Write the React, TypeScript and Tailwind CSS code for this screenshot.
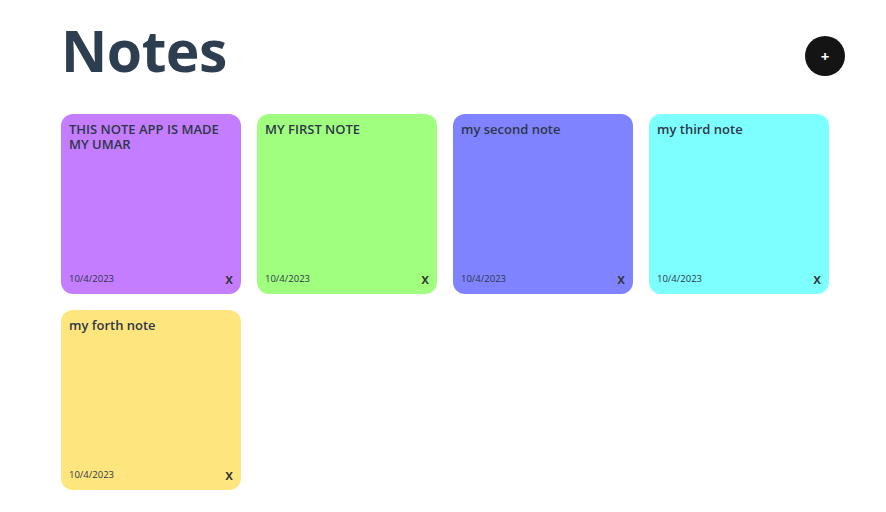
const notes = [
  { text: 'THIS NOTE APP IS MADE MY UMAR', date: '10/4/2023', color: 'bg-[#c57dff]' },
  { text: 'MY FIRST NOTE', date: '10/4/2023', color: 'bg-[#a1ff80]' },
  { text: 'my second note', date: '10/4/2023', color: 'bg-[#8083ff]' },
  { text: 'my third note', date: '10/4/2023', color: 'bg-[#7dffff]' },
  { text: 'my forth note', date: '10/4/2023', color: 'bg-[#ffe57e]' },
];

export default function App() {
  return (
    <div className="min-h-screen bg-white font-['Open_Sans',sans-serif] text-[#2d3748]">
      <div className="flex items-start justify-between pl-[61px] pr-[41px] pt-[10px]">
        <h1 className="text-[57px] font-bold leading-[80px] tracking-[-0.5px] text-[#2c3e50]">Notes</h1>
        <button className="mt-[26px] flex h-10 w-10 items-center justify-center rounded-full bg-[#141414] text-[15px] font-bold leading-none text-white">
          +
        </button>
      </div>
      <div className="mt-[24px] flex flex-wrap gap-4 pl-[61px] pr-[41px]">
        {notes.map((n, i) => (
          <div key={i} className={`flex h-[180px] w-[180px] flex-col justify-between rounded-xl px-2 pt-2 pb-[8px] ${n.color}`}>
            <p className="text-[13px] font-semibold leading-[15px]">{n.text}</p>
            <div className="flex items-center justify-between">
              <span className="text-[9.5px]">{n.date}</span>
              <button className="text-[14px] font-semibold leading-none text-[#333]">x</button>
            </div>
          </div>
        ))}
      </div>
    </div>
  );
}
